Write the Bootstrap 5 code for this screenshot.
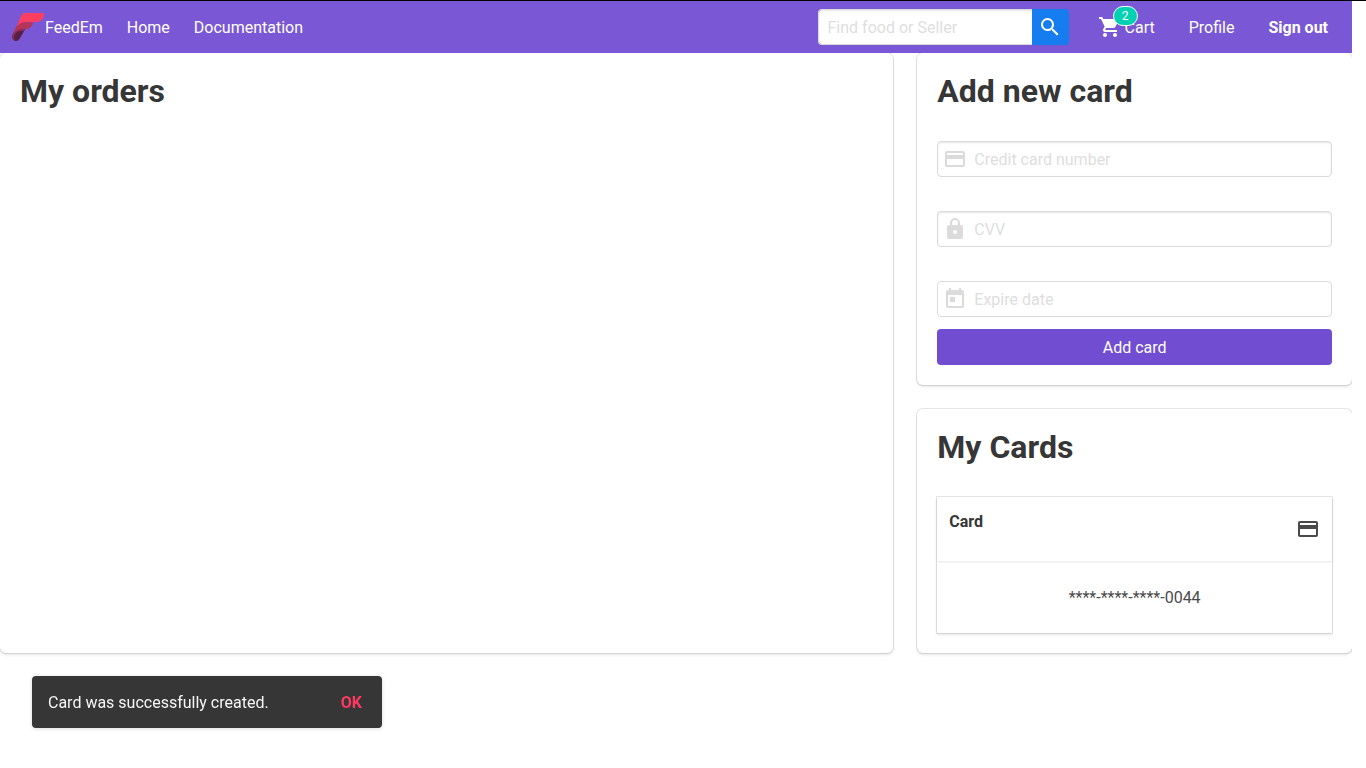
<!DOCTYPE html>
<html lang="en">
<head>
<meta charset="utf-8">
<meta name="viewport" content="width=device-width, initial-scale=1">
<title>FeedEm</title>
<link href="https://cdn.jsdelivr.net/npm/bootstrap@5.3.0/dist/css/bootstrap.min.css" rel="stylesheet">
<style>
  body { font-family: Roboto, sans-serif; font-size: 16px; line-height: 25px; color: #4a4a4a; border-top: 1px solid #000; text-rendering: optimizeLegibility; }
  .page { margin-right: 14px; overflow: hidden; }
  .topbar { background: #7957d5; min-height: 52px; }
  .topbar a { color: #fff; text-decoration: none; }
  .topbar .nav-link { padding: 8px 12px; }
  .account { gap: 34px; padding-right: 24px; }
  h1 { font-size: 32px; line-height: 36px; font-weight: 700; color: #363636; margin: 0; }
  .field-box { height: 36px; padding: 5px 9px; border: 1px solid #dbdbdb; border-radius: 4px; color: #363636; line-height: 24px; box-shadow: inset 0 1px 2px rgba(10,10,10,.1); }
  .field-box::placeholder { color: #dedede; opacity: 1; }
  .field-box.flat { box-shadow: none; }
  .search { width: 251px; margin-right: 29px; }
  .search .btn { background: #167df0; color: #fff; width: 37px; height: 36px; padding: 0; border: 0; border-radius: 0 4px 4px 0; }
  .cart-link { gap: 3px; }
  .cart-count { top: -9px; left: 15px; height: 20px; width: 25px; border: 1px solid #fff; border-radius: 10px; background: #00d1b2; color: #fff; font-size: 12px; line-height: 18px; text-align: center; }
  .panel { padding: 20px; background: #fff; border-radius: 6px; box-shadow: 0 2px 3px rgba(10,10,10,.1), 0 0 0 1px rgba(10,10,10,.1); }
  .pay-form { padding-top: 32px; }
  .pay-field { position: relative; margin-bottom: 34px; }
  .pay-field.last { margin-bottom: 12px; }
  .pay-field .field-box { padding-left: 36px; }
  .pay-field svg { position: absolute; left: 6px; top: 6px; color: #dbdbdb; }
  .btn-add { height: 36px; background: #714dd2; color: #fff; border: 0; border-radius: 4px; padding: 0; line-height: 25px; }
  .btn-add:hover, .search .btn:hover { color: #fff; background: #6943d0; }
  .saved { margin-top: 32px; box-shadow: 0 2px 3px rgba(10,10,10,.1), 0 0 0 1px rgba(10,10,10,.1); }
  .saved-head { min-height: 64px; padding: 12px; box-shadow: 0 1px 2px rgba(10,10,10,.1); }
  .saved-head h2 { font-size: 16px; line-height: 25px; font-weight: 700; color: #363636; margin: 0; }
  .saved-body { padding: 24px 24px 23px; text-align: center; }
  .snackbar { left: 32px; bottom: 40px; width: 350px; min-height: 52px; padding: 0 16px; background: #363636; color: #f5f5f5; border-radius: 4px; box-shadow: 0 1px 4px rgba(0,0,0,.12), 0 0 6px rgba(0,0,0,.04); }
  .snackbar button { color: #ff3860; font-weight: 700; background: none; border: 0; padding: 0 4px; }
</style>
</head>
<body>
<div class="page">
  <nav class="topbar d-flex align-items-center" aria-label="Main">
    <a href="#" class="d-flex align-items-center ms-0 ps-2 pe-0 nav-link">
      <svg width="33" height="32" viewBox="36 33 99 96" class="ms-1" aria-hidden="true">
        <path fill="#5a1f47" d="M45 92q8-9 22-9h11L59 116q-5 8-12 7-11-2-10-14 2-9 8-17z"/>
        <path fill="#842f55" d="M37 107q6-18 24-19l12-1-3 7q-20-6-28 16l2 11q-8-3-7-14z"/>
        <path fill="#b53457" d="M57 67h43q-5 17-19 20l-17 1q-15 2-24 13 5-18 17-34z"/>
        <path fill="#ff3f61" d="M74 39h58q2 25-24 27H75q-13 0-25 14l11-27q5-14 13-14z"/>
      </svg>
      <span class="me-1 pe-2">FeedEm</span>
    </a>
    <a href="#" class="nav-link">Home</a>
    <a href="#" class="nav-link">Documentation</a>
    <form class="search d-flex ms-auto" role="search">
      <input class="field-box form-control rounded-end-0 border-end-0" type="search" placeholder="Find food or Seller" aria-label="Find food or Seller">
      <button class="btn flex-shrink-0" type="button" aria-label="Search">
        <svg class="d-block mx-auto" width="24" height="24" viewBox="0 0 24 24" fill="currentColor"><path d="M9.5,3A6.5,6.5 0 0,1 16,9.5C16,11.11 15.41,12.59 14.44,13.73L14.71,14H15.5L20.5,19L19,20.5L14,15.5V14.71L13.73,14.44C12.59,15.41 11.11,16 9.5,16A6.5,6.5 0 0,1 3,9.5A6.5,6.5 0 0,1 9.5,3M9.5,5C7,5 5,7 5,9.5C5,12 7,14 9.5,14C12,14 14,12 14,9.5C14,7 12,5 9.5,5Z"/></svg>
      </button>
    </form>
    <div class="account d-flex align-items-center">
      <a href="#" class="cart-link d-flex align-items-center position-relative">
        <svg width="24" height="24" viewBox="0 0 24 24" fill="currentColor" aria-hidden="true"><path d="M17,18A2,2 0 0,1 19,20A2,2 0 0,1 17,22C15.89,22 15,21.1 15,20C15,18.89 15.89,18 17,18M1,2H4.27L5.21,4H20A1,1 0 0,1 21,5C21,5.17 20.95,5.34 20.88,5.5L17.3,11.97C16.96,12.58 16.3,13 15.55,13H8.1L7.2,14.63L7.17,14.75A0.25,0.25 0 0,0 7.42,15H19V17H7C5.89,17 5,16.1 5,15C5,14.65 5.09,14.32 5.24,14.04L6.6,11.59L3,4H1V2M7,18A2,2 0 0,1 9,20A2,2 0 0,1 7,22C5.89,22 5,21.1 5,20C5,18.89 5.89,18 7,18Z"/></svg>
        <span>Cart</span>
        <span class="cart-count position-absolute">2</span>
      </a>
      <a href="#">Profile</a>
      <a href="#" class="fw-bold">Sign out</a>
    </div>
  </nav>

  <main class="overflow-hidden pb-2">
    <div class="row gx-4">
      <div class="col-8 d-flex">
        <section class="panel flex-fill"><h1>My orders</h1></section>
      </div>
      <div class="col-4 d-flex flex-column gap-4">
        <section class="panel">
          <h1>Add new card</h1>
          <form class="pay-form">
            <div class="pay-field">
              <input class="field-box form-control" type="text" placeholder="Credit card number" aria-label="Credit card number">
              <svg width="24" height="24" viewBox="0 0 24 24" fill="currentColor" aria-hidden="true"><path d="M20,8H4V6H20M20,18H4V12H20M20,4H4C2.89,4 2,4.89 2,6V18C2,19.11 2.89,20 4,20H20A2,2 0 0,0 22,18V6C22,4.89 21.1,4 20,4Z"/></svg>
            </div>
            <div class="pay-field">
              <input class="field-box form-control" type="text" placeholder="CVV" aria-label="CVV">
              <svg width="24" height="24" viewBox="0 0 24 24" fill="currentColor" aria-hidden="true"><path d="M12,17A2,2 0 0,0 14,15C14,13.89 13.1,13 12,13A2,2 0 0,0 10,15A2,2 0 0,0 12,17M18,8A2,2 0 0,1 20,10V20A2,2 0 0,1 18,22H6A2,2 0 0,1 4,20V10C4,8.89 4.9,8 6,8H7V6A5,5 0 0,1 12,1A5,5 0 0,1 17,6V8H18M12,3A3,3 0 0,0 9,6V8H15V6A3,3 0 0,0 12,3Z"/></svg>
            </div>
            <div class="pay-field last">
              <input class="field-box flat form-control" type="text" placeholder="Expire date" aria-label="Expire date">
              <svg width="24" height="24" viewBox="0 0 24 24" fill="currentColor" aria-hidden="true"><path d="M7,10H12V15H7M19,19H5V8H19M19,3H18V1H16V3H8V1H6V3H5C3.89,3 3,3.9 3,5V19A2,2 0 0,0 5,21H19A2,2 0 0,0 21,19V5A2,2 0 0,0 19,3Z"/></svg>
            </div>
            <button class="btn btn-add w-100 d-block" type="button">Add card</button>
          </form>
        </section>
        <section class="panel">
          <h1>My Cards</h1>
          <article class="saved">
            <header class="saved-head d-flex justify-content-between">
              <h2>Card</h2>
              <svg class="align-self-center" width="24" height="24" viewBox="0 0 24 24" fill="currentColor" aria-hidden="true"><path d="M20,8H4V6H20M20,18H4V12H20M20,4H4C2.89,4 2,4.89 2,6V18C2,19.11 2.89,20 4,20H20A2,2 0 0,0 22,18V6C22,4.89 21.1,4 20,4Z"/></svg>
            </header>
            <div class="saved-body">****-****-****-0044</div>
          </article>
        </section>
      </div>
    </div>
  </main>
</div>

<div class="snackbar position-fixed d-flex align-items-center justify-content-between" role="status">
  <span>Card was successfully created.</span>
  <button type="button">OK</button>
</div>
<script src="https://cdn.jsdelivr.net/npm/bootstrap@5.3.0/dist/js/bootstrap.bundle.min.js"></script>
</body>
</html>
